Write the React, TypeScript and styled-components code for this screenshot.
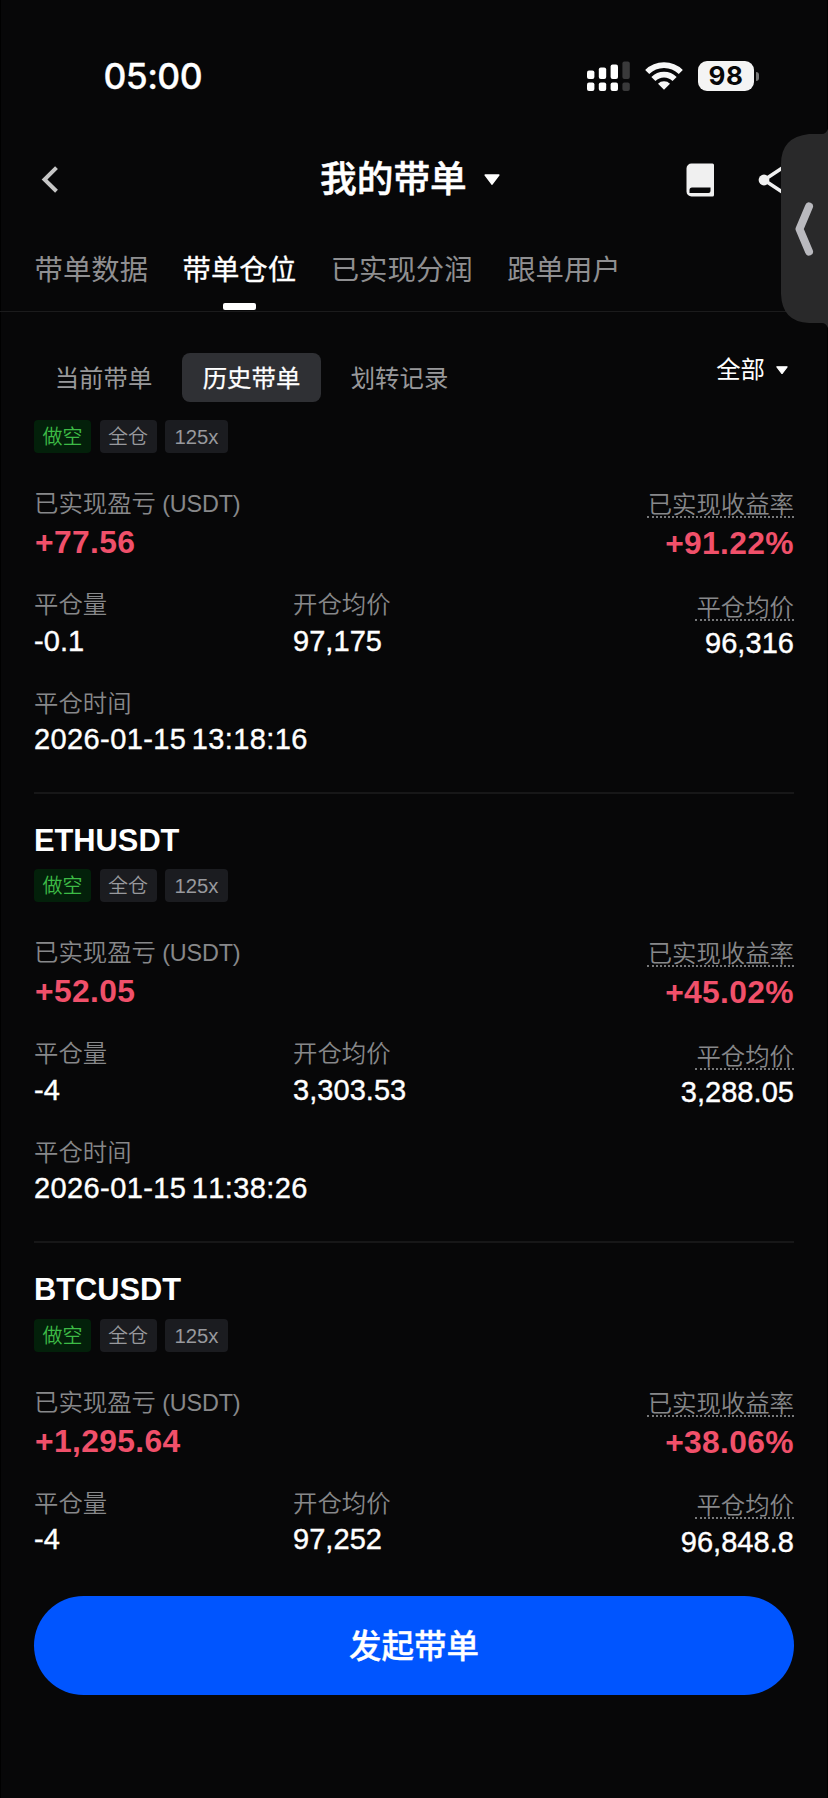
import React from 'react';
import styled, { createGlobalStyle, css } from 'styled-components';

const GlobalStyle = createGlobalStyle`
  * { box-sizing: border-box; }
  html, body { margin: 0; padding: 0; background: #070708; }
  body {
    font-family: 'Liberation Sans', 'Noto Sans CJK SC', sans-serif;
    font-kerning: none;
    color: #fff;
  }
  button { font: inherit; color: inherit; border: 0; background: none; padding: 0; }
`;

const Screen = styled.main`
  position: relative;
  width: 828px;
  height: 1798px;
  display: flex;
  flex-direction: column;
  overflow: hidden;
  background: #070708;
  box-shadow: inset 1px 0 #000, inset -1px 0 #000;
`;

const StatusBar = styled.header`
  display: flex;
  align-items: center;
  justify-content: space-between;
  height: 152px;
  padding: 0 69px 0 103.5px;
`;

const Clock = styled.time`
  padding-top: 2px;
  font-family: Inter, sans-serif;
  font-size: 35.5px;
  font-weight: 500;
  line-height: 40px;
  letter-spacing: -0.6px;
  -webkit-text-stroke: 0.3px #fff;
`;

const StatusIcons = styled.div`
  display: flex;
  align-items: center;
`;

const SignalIcon = styled.svg`margin-right: 15px;`;
const WifiIcon = styled.svg`margin-right: 15px;`;

const Battery = styled.div`
  width: 56px;
  height: 30px;
  border-radius: 9px;
  background: #f4f4f4;
  color: #070708;
  font: 700 26px/30px Inter, sans-serif;
  letter-spacing: 0.6px;
  text-align: center;
`;

const BatteryTip = styled.div`
  width: 3px;
  height: 9px;
  margin-left: 2px;
  border-radius: 0 5px 5px 0;
  background: #777;
`;

const NavBar = styled.nav`
  display: grid;
  grid-template-columns: 279px 1fr 281px;
  align-items: center;
  height: 56px;
  padding: 0 0 0 41px;
`;

const TitleButton = styled.button`
  display: flex;
  align-items: center;
  gap: 17px;
  font-size: 36.7px;
  font-weight: 500;
  line-height: 52px;
  -webkit-text-stroke: 0.5px #fff;
`;

const NavActions = styled.div`
  display: flex;
  align-items: center;
  gap: 44px;
  padding-left: 139px;
`;

const TabList = styled.div`
  display: flex;
  gap: 34.5px;
  height: 104px;
  padding: 41px 0 0 34.5px;
  border-bottom: 1px solid #1b1b1c;
`;

const Tab = styled.button<{ $active?: boolean }>`
  display: flex;
  flex-direction: column;
  align-items: center;
  height: 62px;
  font-size: 28.4px;
  line-height: 42px;
  color: ${p => (p.$active ? '#fff' : '#8f8f91')};
  ${p => p.$active && css`
    -webkit-text-stroke: 0.3px #fff;
    &::after {
      content: '';
      width: 33px;
      height: 7px;
      margin-top: 12px;
      border-radius: 2px;
      background: #fff;
    }
  `}
`;

const FilterBar = styled.div`
  display: flex;
  align-items: flex-start;
  gap: 9px;
  height: 108px;
  padding: 41px 40px 0 34px;
`;

const Segment = styled.button<{ $active?: boolean }>`
  width: 139px;
  height: 49px;
  border-radius: 8px;
  font-size: 24.4px;
  line-height: 51px;
  color: ${p => (p.$active ? '#fff' : '#98989a')};
  background: ${p => (p.$active ? '#2f3034' : 'transparent')};
  -webkit-text-stroke: ${p => (p.$active ? '0.25px #fff' : '0')};
`;

const ScopeSelect = styled.button`
  display: flex;
  align-items: center;
  gap: 11px;
  margin-left: auto;
  font-size: 24.4px;
  line-height: 34px;
`;

const Record = styled.article<{ $clipped: boolean }>`
  flex: none;
  height: ${p => (p.$clipped ? 371.5 : 449.5)}px;
  padding: 0 34px;
`;

const PairName = styled.h2`
  margin: 0;
  padding-top: 27px;
  height: 77.5px;
  border-top: 2px solid #171718;
  font-size: 30.8px;
  line-height: 40px;
  font-weight: 700;
`;

const Tags = styled.div`
  display: flex;
  gap: 8.5px;
  height: 33px;
`;

const Tag = styled.span<{ $tone: 'short' | 'plain' }>`
  height: 33px;
  padding: 0 8.5px;
  border-radius: 4px;
  font-size: 20px;
  line-height: 34px;
  font-weight: 350;
  ${p => p.$tone === 'short'
    ? css`color: #3dbb46; background: #03200a;`
    : css`color: #98999d; background: #1b1c20;`}
`;

const Leverage = styled(Tag)`
  padding: 0 9.5px;
  font-size: 20.3px;
`;

const Row = styled.div<{ $top: number }>`
  display: grid;
  grid-template-columns: 259px 1fr auto;
  padding-top: ${p => p.$top}px;
`;

const Field = styled.div<{ $end?: boolean; $drop?: number }>`
  display: flex;
  flex-direction: column;
  align-items: ${p => (p.$end ? 'flex-end' : 'flex-start')};
  grid-column: ${p => (p.$end ? 3 : 'auto')};
  padding-top: ${p => p.$drop ?? 0}px;
`;

const Label = styled.span<{ $hint?: boolean }>`
  height: 32px;
  font-size: 24.4px;
  line-height: 34px;
  font-weight: 350;
  color: #87888a;
  white-space: nowrap;
  ${p => p.$hint && css`
    height: 31px;
    margin-bottom: 2px;
    padding-left: 1px;
    line-height: 35px;
    border-bottom: 2px dotted #77787a;
  `}
`;

const Unit = styled.span`
  font-size: 23.4px;
  letter-spacing: -0.2px;
`;

const Profit = styled.strong`
  margin-top: 3px;
  padding-left: 1px;
  font-size: 31.8px;
  line-height: 40px;
  font-weight: 700;
  letter-spacing: 0.35px;
  color: #f0506a;
`;

const Value = styled.span`
  margin-top: 2.5px;
  font-size: 29px;
  line-height: 36px;
  letter-spacing: 0.05px;
  -webkit-text-stroke: 0.4px #fff;
  white-space: nowrap;
`;

const Timestamp = styled(Value)`
  letter-spacing: 0.4px;
  word-spacing: -3px;
`;

const ActionArea = styled.footer`
  position: absolute;
  left: 0;
  right: 0;
  bottom: 0;
  height: 240px;
  padding: 38px 34px 0;
`;

const PrimaryButton = styled.button`
  display: block;
  width: 100%;
  height: 99px;
  border-radius: 50px;
  background: #0055ff;
  font-size: 32.5px;
  line-height: 102px;
  font-weight: 500;
  -webkit-text-stroke: 0.3px #fff;
`;

const SideHandle = styled.svg`
  position: absolute;
  right: 0;
  top: 128px;
`;

const Caret = ({ size }: { size: number }) => (
  <svg width={size} height={size * 0.7} viewBox="0 0 16 11">
    <path d="M1.2 1h13.6L8 10z" fill="#fff" stroke="#fff" strokeWidth="1.6" strokeLinejoin="round" />
  </svg>
);

type Trade = {
  symbol?: string;
  profit: string;
  rate: string;
  amount: string;
  open: string;
  close: string;
  time?: string;
};

const trades: Trade[] = [
  { profit: '+77.56', rate: '+91.22%', amount: '-0.1', open: '97,175', close: '96,316', time: '2026-01-15 13:18:16' },
  { symbol: 'ETHUSDT', profit: '+52.05', rate: '+45.02%', amount: '-4', open: '3,303.53', close: '3,288.05', time: '2026-01-15 11:38:26' },
  { symbol: 'BTCUSDT', profit: '+1,295.64', rate: '+38.06%', amount: '-4', open: '97,252', close: '96,848.8' },
];

const TradeRecord = ({ trade }: { trade: Trade }) => (
  <Record $clipped={!trade.symbol}>
    {trade.symbol && <PairName>{trade.symbol}</PairName>}
    <Tags>
      <Tag $tone="short">做空</Tag>
      <Tag $tone="plain">全仓</Tag>
      <Leverage $tone="plain">125x</Leverage>
    </Tags>
    <Row $top={34}>
      <Field>
        <Label>已实现盈亏<Unit> (USDT)</Unit></Label>
        <Profit>{trade.profit}</Profit>
      </Field>
      <Field $end>
        <Label $hint>已实现收益率</Label>
        <Profit>{trade.rate}</Profit>
      </Field>
    </Row>
    <Row $top={25}>
      <Field>
        <Label>平仓量</Label>
        <Value>{trade.amount}</Value>
      </Field>
      <Field>
        <Label>开仓均价</Label>
        <Value>{trade.open}</Value>
      </Field>
      <Field $end $drop={1.5}>
        <Label $hint>平仓均价</Label>
        <Value>{trade.close}</Value>
      </Field>
    </Row>
    {trade.time && (
      <Row $top={25.5}>
        <Field>
          <Label>平仓时间</Label>
          <Timestamp>{trade.time}</Timestamp>
        </Field>
      </Row>
    )}
  </Record>
);

export default function App() {
  return (
    <>
      <GlobalStyle />
      <Screen>
        <StatusBar>
          <Clock>05:00</Clock>
          <StatusIcons>
            <SignalIcon width="43" height="30" viewBox="0 0 43 30">
              <g fill="#fff">
                <rect x="0" y="9.5" width="7.4" height="8.5" rx="2" />
                <rect x="11.8" y="6.5" width="7.4" height="11.5" rx="2" />
                <rect x="23.6" y="3.5" width="7.4" height="14.5" rx="2" />
                <rect x="0" y="21.5" width="7.4" height="8.5" rx="2" />
                <rect x="11.8" y="21.5" width="7.4" height="8.5" rx="2" />
                <rect x="23.6" y="21.5" width="7.4" height="8.5" rx="2" />
              </g>
              <g fill="#39393a">
                <rect x="35.4" y="0.5" width="7.4" height="17.5" rx="2" />
                <rect x="35.4" y="21.5" width="7.4" height="8.5" rx="2" />
              </g>
            </SignalIcon>
            <WifiIcon width="38" height="28" viewBox="0 0 38 28">
              <g fill="none" stroke="#f8f8f8" strokeWidth="5.8">
                <path d="M2.2 10a24 24 0 0 1 33.6 0" />
                <path d="M8.4 17a15 15 0 0 1 21.2 0" />
              </g>
              <path d="M19 27.8l-6-6a8.5 8.5 0 0 1 12 0z" fill="#f8f8f8" />
            </WifiIcon>
            <Battery>98</Battery>
            <BatteryTip />
          </StatusIcons>
        </StatusBar>

        <NavBar>
          <svg width="18" height="30" viewBox="0 0 18 30">
            <path d="M15.5 2.6L3.5 14.5l12 11.8" fill="none" stroke="#c6c6c6" strokeWidth="4" />
          </svg>
          <TitleButton>
            我的带单
            <Caret size={16} />
          </TitleButton>
          <NavActions>
            <svg width="28" height="34" viewBox="0 0 28 34">
              <path
                fillRule="evenodd"
                fill="#f0f0f0"
                d="M5.5 .5H26.5a1.5 1.5 0 0 1 1.5 1.5v30a1.5 1.5 0 0 1-1.5 1.5H5.5A5 5 0 0 1 .5 28.5V5.500A5 5 0 0 1 5.500 .5zM6 24.500a2.500 2.500 0 0 0-2.500 2.500v3H22.500a2 2 0 0 0 2-2v-3.500z"
              />
            </svg>
            <svg width="32" height="36" viewBox="0 0 32 36">
              <path d="M28 3.5L6 18l22 14.5" fill="none" stroke="#f0f0f0" strokeWidth="3.6" />
              <circle cx="6" cy="18" r="5.4" fill="#f0f0f0" />
            </svg>
          </NavActions>
        </NavBar>

        <TabList>
          <Tab>带单数据</Tab>
          <Tab $active>带单仓位</Tab>
          <Tab>已实现分润</Tab>
          <Tab>跟单用户</Tab>
        </TabList>

        <FilterBar>
          <Segment>当前带单</Segment>
          <Segment $active>历史带单</Segment>
          <Segment>划转记录</Segment>
          <ScopeSelect>
            全部
            <Caret size={12} />
          </ScopeSelect>
        </FilterBar>

        {trades.map((trade, index) => (
          <TradeRecord key={index} trade={trade} />
        ))}

        <ActionArea>
          <PrimaryButton>发起带单</PrimaryButton>
        </ActionArea>

        <SideHandle width="47" height="202" viewBox="0 0 47 202">
          <path d="M47 1Q45 6 41 6H28Q0 9 0 36V166Q1 194 28 195H41Q45 195 47 200z" fill="#29292a" />
          <path d="M28 78.5L18.5 101 28 123.5" fill="none" stroke="#b9b9be" strokeWidth="8" strokeLinecap="round" strokeLinejoin="round" />
        </SideHandle>
      </Screen>
    </>
  );
}
